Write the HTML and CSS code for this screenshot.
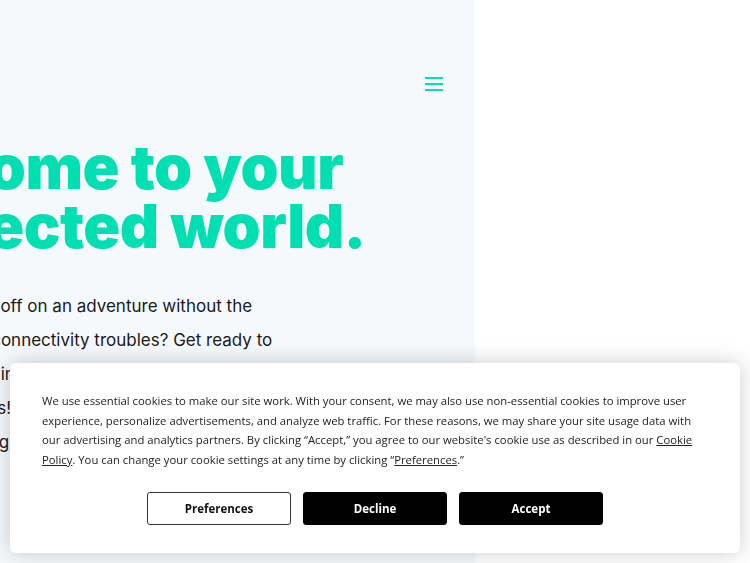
FILE: index.html
```html
<!DOCTYPE html>
<html lang="en">
<head>
<meta charset="utf-8">
<title>Welcome</title>
<link rel="stylesheet" href="styles.css">
</head>
<body>
<div class="page">
  <section class="hero">
    <div class="topbar">
      <button class="menu" aria-label="Menu"><span></span><span></span><span></span></button>
    </div>
    <div class="hero-content">
      <h1 class="title">Welcome to your<br>connected world.</h1>
      <p class="lead">Want to set off on an adventure without the<br>worries of connectivity troubles? Get ready to<br>go roaming in over 190 countries worldwide,<br>glide with us! Stay online wherever you are.<br>Get your bags ready and explore the world today.</p>
    </div>
  </section>
  <section class="blank"></section>
</div>

<div class="cookie">
  <p class="cookie-text">We use essential cookies to make our site work. With your consent, we may also use non-essential cookies to improve user experience, personalize advertisements, and analyze web traffic. For these reasons, we may share your site usage data with our advertising and analytics partners. By clicking &ldquo;Accept,&rdquo; you agree to our website's cookie use as described in our <a href="#">Cookie Policy</a>. You can change your cookie settings at any time by clicking &ldquo;<a href="#">Preferences</a>.&rdquo;</p>
  <div class="cookie-actions">
    <button class="btn btn-outline">Preferences</button>
    <button class="btn btn-dark">Decline</button>
    <button class="btn btn-dark">Accept</button>
  </div>
</div>
</body>
</html>
```
FILE: styles.css
```css
html, body {
  margin: 0;
  padding: 0;
  height: 100%;
  overflow: hidden;
  background: #ffffff;
}
.page {
  display: flex;
  height: 563px;
}
.hero {
  width: 475px;
  flex: none;
  background: #f5f9fc;
  overflow: hidden;
}
.blank {
  flex: 1;
  background: #ffffff;
}
.topbar {
  display: flex;
  justify-content: flex-end;
  padding: 77px 31px 0 0;
}
.menu {
  display: flex;
  flex-direction: column;
  gap: 4px;
  width: 20px;
  padding: 0 1px;
  border: 0;
  background: transparent;
  cursor: pointer;
}
.menu span {
  display: block;
  height: 2px;
  width: 18px;
  background: #00dfb2;
}
.hero-content {
  margin-left: -165px;
  padding-top: 47px;
}
.title {
  margin: 0;
  font-family: Inter, "Noto Sans", sans-serif;
  font-weight: 900;
  font-size: 61px;
  line-height: 59px;
  letter-spacing: -0.5px;
  color: #00dfb2;
  white-space: nowrap;
}
.lead {
  margin: 33px 0 0;
  padding-left: 70px;
  font-family: Inter, "Noto Sans", sans-serif;
  font-size: 17px;
  line-height: 34px;
  color: #1a1a1a;
  white-space: nowrap;
}
.cookie {
  position: fixed;
  left: 10px;
  right: 10px;
  bottom: 10px;
  height: 190px;
  box-sizing: border-box;
  padding: 28px 40px 0 32px;
  background: #ffffff;
  border-radius: 6px;
  box-shadow: 0 0 22px rgba(0, 0, 0, 0.2);
  font-family: "Open Sans", "Noto Sans", sans-serif;
}
.cookie-text {
  margin: 0;
  font-size: 11.3px;
  line-height: 19.7px;
  color: #222222;
}
.cookie-text a {
  color: #222222;
  text-decoration: underline;
}
.cookie-actions {
  display: flex;
  justify-content: center;
  gap: 12px;
  margin-top: 22px;
  padding-left: 8px;
}
.btn {
  width: 144px;
  height: 33px;
  border-radius: 3px;
  font-family: "Open Sans", "Noto Sans", sans-serif;
  font-size: 11.5px;
  font-weight: 700;
  cursor: pointer;
}
.btn-outline {
  background: #ffffff;
  color: #111111;
  border: 1px solid #333333;
}
.btn-dark {
  background: #000000;
  color: #ffffff;
  border: 1px solid #000000;
}
```
